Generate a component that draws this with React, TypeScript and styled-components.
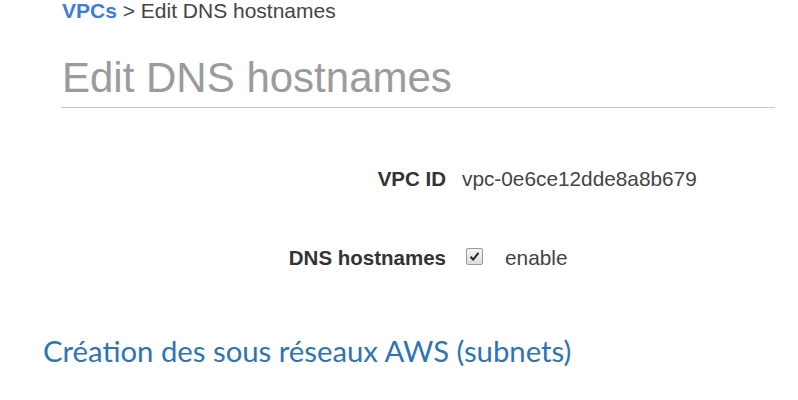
import React from "react";
import styled, { createGlobalStyle } from "styled-components";

const Global = createGlobalStyle`
  html, body { margin: 0; padding: 0; background: #ffffff; }
  body { font-family: "Liberation Sans", Arial, sans-serif; }
`;

const Page = styled.div`
  width: 798px;
  height: 400px;
  display: flex;
  flex-direction: column;
  overflow: hidden;
`;

const Console = styled.div`
  display: flex;
  flex-direction: column;
  padding: 0 23px 0 62px;
`;

const Breadcrumb = styled.div`
  font-size: 21px;
  line-height: 22px;
  color: #444444;
  white-space: nowrap;
`;

const Crumb = styled.a`
  color: #3b7dd8;
  font-weight: bold;
  text-decoration: none;
`;

const Title = styled.h1`
  margin: 32px 0 0 -1px;
  padding: 0 0 5px 1px;
  font-size: 42px;
  line-height: 48px;
  font-weight: normal;
  color: #9b9b9b;
  border-bottom: 1px solid #c8c8c8;
`;

const Form = styled.div`
  display: grid;
  grid-template-columns: 384px auto;
  column-gap: 16px;
  row-gap: 56px;
  margin-top: 59px;
  align-items: center;
`;

const Label = styled.div`
  text-align: right;
  font-weight: bold;
  font-size: 20.5px;
  line-height: 23px;
  color: #333333;
  white-space: nowrap;
`;

const Value = styled.div`
  display: flex;
  align-items: center;
  font-size: 20.8px;
  line-height: 23px;
  color: #444444;
  white-space: nowrap;
`;

const Check = styled.span`
  width: 15px;
  height: 15px;
  margin: -2px 22px 0 4px;
  border: 1px solid #9a9a9a;
  border-radius: 2px;
  background: linear-gradient(#f4f4f4, #dcdcdc);
  display: flex;
  align-items: center;
  justify-content: center;
`;

const SubHeading = styled.h2`
  margin: 64px 0 0 43px;
  font-family: Lato, "Open Sans", sans-serif;
  font-weight: normal;
  font-size: 29.3px;
  line-height: 35px;
  color: #2e74b5;
  white-space: nowrap;
`;

export default function App() {
  return (
    <Page>
      <Global />
      <Console>
        <Breadcrumb>
          <Crumb href="#">VPCs</Crumb> &gt; Edit DNS hostnames
        </Breadcrumb>
        <Title>Edit DNS hostnames</Title>
        <Form>
          <Label>VPC ID</Label>
          <Value>vpc-0e6ce12dde8a8b679</Value>
          <Label>DNS hostnames</Label>
          <Value>
            <Check>
              <svg width="11" height="11" viewBox="0 0 11 11">
                <path d="M1.5 5.8 L4.2 8.5 L9.5 1.8" fill="none" stroke="#222" strokeWidth="2" />
              </svg>
            </Check>
            enable
          </Value>
        </Form>
      </Console>
      <SubHeading>Création des sous réseaux AWS (subnets)</SubHeading>
    </Page>
  );
}
